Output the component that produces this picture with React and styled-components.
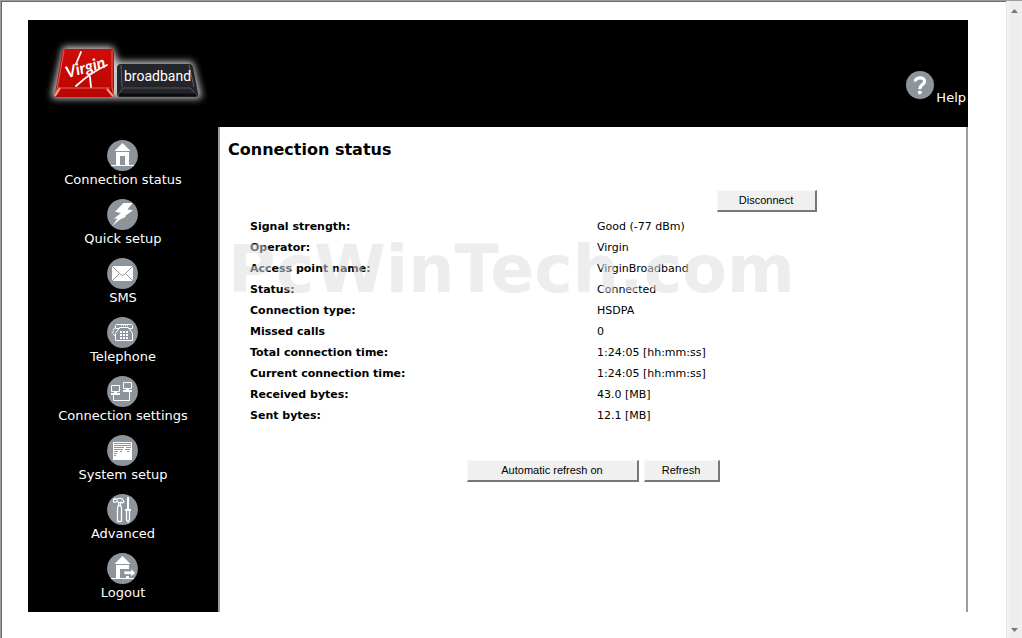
import React from "react";
import styled, { createGlobalStyle } from "styled-components";

const GlobalStyle = createGlobalStyle`
  *, *::before, *::after { box-sizing: border-box; }
  body {
    margin: 0;
    background: #fff;
    color: #000;
    font-family: Verdana, "DejaVu Sans", sans-serif;
    font-size: 11px;
  }
`;

const Viewport = styled.div`
  display: flex;
  min-height: 100vh;
  border-top: 1px solid #9c9c9c;
  border-left: 1px solid #9c9c9c;
`;

const Page = styled.div`
  flex: 1;
  min-width: 0;
  padding: 18px 38px 26px 26px;
  border-top: 1px solid #696969;
  border-left: 1px solid #696969;
`;

const ScrollTrack = styled.div`
  width: 16px;
  display: flex;
  flex-direction: column;
  justify-content: space-between;
  align-items: center;
  padding: 8px 0 6px;
  border-left: 1px solid #e6e6e6;
  background: linear-gradient(to right, #f3f3f3, #ececec 40%, #efefef);
`;

const Header = styled.header`
  display: flex;
  justify-content: space-between;
  align-items: flex-end;
  padding: 15px 2px 12px 12px;
  background: #000;
`;

const LogoLink = styled.a`
  display: block;
  svg { display: block; }
`;

const HelpLink = styled.a`
  display: flex;
  align-items: flex-end;
  gap: 2px;
  padding-bottom: 9px;
  color: #fff;
  font-size: 13px;
  line-height: 16px;
  text-decoration: none;
  svg { display: block; margin-bottom: 7px; }
`;

const Columns = styled.div`
  display: flex;
`;

const Sidebar = styled.nav`
  flex: none;
  width: 190px;
  padding: 13px 0 10px;
  background: #000;
`;

const NavList = styled.ul`
  display: flex;
  flex-direction: column;
  gap: 10px;
  margin: 0;
  padding: 0;
  list-style: none;
`;

const NavLink = styled.a`
  display: flex;
  flex-direction: column;
  align-items: center;
  color: #fff;
  font-size: 13px;
  line-height: 18px;
  text-decoration: none;
  svg { display: block; margin-right: 1px; }
`;

const Content = styled.main`
  flex: 1;
  min-width: 0;
  border: solid #9c9c9c;
  border-width: 0 2px;
`;

const Title = styled.h1`
  margin: 0;
  padding: 13px 8px 0;
  font-size: 16px;
  line-height: 20px;
`;

const StatusArea = styled.section`
  position: relative;
  padding: 30px 28px 0;
`;

const StatusTable = styled.table`
  width: 100%;
  table-layout: fixed;
  border-collapse: collapse;
  line-height: 21px;
  th, td { padding: 0; text-align: left; }
  tbody th { padding-left: 2px; }
  tbody td { padding-left: 4px; }
`;

const ActionCell = styled.td`
  && { height: 26px; padding-left: 2px; text-align: center; vertical-align: top; }
`;

const Button = styled.button`
  width: ${(p) => p.$width}px;
  height: 22px;
  padding: 0 0 1px;
  border: solid;
  border-width: 1px 2px 2px 1px;
  border-color: #f8f8f8 #777 #777 #f8f8f8;
  background: #f0f0f0;
  color: #000;
  font: 11px "Liberation Sans", Arial, sans-serif;
`;

const Actions = styled.div`
  display: flex;
  justify-content: center;
  gap: 5px;
  padding-top: 34px;
`;

const Watermark = styled.div`
  position: absolute;
  top: 74px;
  left: 8px;
  color: rgba(220, 220, 220, 0.52);
  font-size: 65px;
  font-weight: bold;
  line-height: 72px;
  white-space: nowrap;
  pointer-events: none;
`;

const IconBase = ({ children }) => (
  <svg width="31" height="31" viewBox="0 0 31 31" aria-hidden="true">
    <circle cx="15.5" cy="15.5" r="15.4" fill="#8e949c" />
    {children}
  </svg>
);

const HomeIcon = () => (
  <IconBase>
    <path d="M15.5 3 L23.5 11 H7.5Z" fill="#fff" />
    <path d="M9 12H22V25H27V26H4V25H9Z M13 16V25H18V16Z" fill="#fff" fillRule="evenodd" shapeRendering="crispEdges" />
  </IconBase>
);

const BoltIcon = () => (
  <IconBase>
    <path d="M16.5 4H25.5L20.5 10.5L26 11.2L18 17L19 17.7L13 20.5L5 27L10.5 19.8L7 19.5L14 14L8 12.7Z" fill="#fff" />
  </IconBase>
);

const MailIcon = () => (
  <IconBase>
    <path d="M5 8H26V23H5Z" fill="#fff" />
    <path d="M5 8L13.5 16.5Q15.5 18.5 17.5 16.5L26 8M5 23L12 16M26 23L19 16" fill="none" stroke="#8e949c" />
  </IconBase>
);

const PhoneIcon = () => (
  <IconBase>
    <path d="M9.5 7.5H24.5L25.5 8.5V11.5H21.5V10.5H12.5V11.5H8.5V8.5ZM11.5 12L8.5 16.5V23.5H25.5V16.5L22.5 12" fill="none" stroke="#fff" />
    <path d="M14 8.8h7" stroke="#fff" strokeDasharray="1 1" />
    <path d="M8 11l-2 1 1 2-2 1 1 2 2 1-1 1" fill="none" stroke="#fff" strokeDasharray="1.5 .7" />
    <path d="M13 14h2v2h-2zM16 14h2v2h-2zM19 14h2v2h-2zM13 17h2v2h-2zM16 17h2v2h-2zM19 17h2v2h-2zM13 20h2v2h-2zM16 20h2v2h-2zM19 20h2v2h-2z" fill="#fff" />
  </IconBase>
);

const NetworkIcon = () => (
  <IconBase>
    <g fill="none" stroke="#fff">
      <path d="M4.5 9.5H12.5V15.5H4.5ZM16.5 6.5H24.5V12.5H16.5ZM6.5 19V24.5H22.5V16" />
    </g>
    <path d="M4 17H13V19H4ZM16 14H25V16H16ZM7 16H10V17H7ZM19 13H22V14H19Z" fill="#fff" />
  </IconBase>
);

const DocumentIcon = () => (
  <IconBase>
    <path d="M6 7H25V25H6Z" fill="#fff" />
    <path d="M7 8.5H24M7 10.5H24M7 12.5H17M19 12.5H24M7 14.5H16M18 14.5H23M7 16.5H11M13 16.5H15M20 16.5H22M7 18.5H10M7 20.5H9" stroke="#8e949c" />
  </IconBase>
);

const ToolsIcon = () => (
  <IconBase>
    <path d="M12 4.5Q15.5 3.5 17 8L15.5 9L14 8Q11 9.5 10.5 7Q8 9 6.5 8V5.5Q8 4 9.5 5.5Q10.5 4.5 12 4.5M11.5 8.5V11.5M13.5 8.5V11.5" fill="none" stroke="#fff" strokeWidth="1.2" />
    <path d="M11.5 11.5H13.5L14.5 14V27L13.5 27.5H11L10.5 27V14Z" fill="none" stroke="#fff" strokeWidth="1.3" />
    <path d="M20 3h2v12h-2zM18 15h6v2h-6z" fill="#fff" />
    <path d="M19.5 17V25.5L20.5 27.5H21.5L22.5 25.5V17" fill="none" stroke="#fff" strokeWidth="1.3" />
  </IconBase>
);

const LogoutIcon = () => (
  <IconBase>
    <path d="M15.5 3L23.5 11H7.5Z" fill="#fff" />
    <path d="M9 12H22V16H13V25H19V23H22V25H27V26H4V25H9Z" fill="#fff" />
    <path d="M17 18H24V15.5L28.5 20L24 24V21.5H17Z" fill="#fff" stroke="#8e949c" strokeWidth=".7" />
  </IconBase>
);

const HelpIcon = () => (
  <svg width="28" height="28" viewBox="0 0 28 28" aria-hidden="true">
    <circle cx="14" cy="14" r="14" fill="#8e949c" />
    <path d="M9.3 10.5C8.8 6 18.6 5.4 18.6 10.2C18.6 13.6 13.8 13.5 13.8 18" fill="none" stroke="#fff" strokeWidth="3.2" />
    <circle cx="13.8" cy="21.4" r="1.9" fill="#fff" />
  </svg>
);

const Logo = () => (
  <svg width="180" height="80" viewBox="0 0 180 80" role="img" aria-label="Virgin broadband">
    <defs>
      <filter id="glow" x="-20%" y="-30%" width="140%" height="160%">
        <feGaussianBlur stdDeviation="3.5" />
      </filter>
      <linearGradient id="redKey" x1="0" y1="0" x2="0" y2="1">
        <stop offset="0" stopColor="#d00c08" />
        <stop offset="1" stopColor="#b90500" />
      </linearGradient>
    </defs>
    <path d="M25 14H71L76 29H151L159 61H14Z" fill="#c8c8c8" stroke="#c8c8c8" strokeWidth="5" strokeLinejoin="round" filter="url(#glow)" />
    <path d="M27 14H70Q74 14 74 18V59Q74 62 70 62H17Q14 62 15 58L22 18Q23 14 27 14Z" fill="url(#redKey)" />
    <path d="M24 16L17 54L15 60M72 16V53L74 60M18 53H70" fill="none" stroke="#e0645b" strokeWidth="1" />
    <path d="M15 61L20 53M73 61L67 54" stroke="#ff9b8d" strokeWidth="2" />
    <path d="M81 29H149Q152 29 153 32L158 58Q159 62 155 62H80Q77 62 77 58V33Q77 29 81 29Z" fill="#24252a" />
    <path d="M78 60L83 53H150L157 60" fill="none" stroke="#55565c" />
    <path d="M81 30L82 52M149 30L154 52" stroke="#606167" strokeWidth="1" />
    <path d="M79 60H156" stroke="#0c0c10" strokeWidth="3" />
    <g transform="rotate(-16 28 42)">
      <text x="27" y="43" fill="#fff" fontFamily="Lato, sans-serif" fontStyle="italic" fontWeight="700" fontSize="16">Virgin</text>
    </g>
    <path d="M41 17L36 29M36 51Q50 38 67 30M50 42L51 52" fill="none" stroke="#fff" strokeWidth="1.8" strokeLinecap="round" />
    <text x="84" y="46" fill="#fff" fontFamily="Roboto, sans-serif" fontSize="14">broadband</text>
  </svg>
);

const ScrollArrow = ({ up }) => (
  <svg width="7" height="4" viewBox="0 0 7 4" aria-hidden="true">
    <path d={up ? "M0 4L3.5 0L7 4Z" : "M0 0H7L3.5 4Z"} fill="#777" />
  </svg>
);

const NAV = [
  ["Connection status", HomeIcon],
  ["Quick setup", BoltIcon],
  ["SMS", MailIcon],
  ["Telephone", PhoneIcon],
  ["Connection settings", NetworkIcon],
  ["System setup", DocumentIcon],
  ["Advanced", ToolsIcon],
  ["Logout", LogoutIcon],
];

const STATUS = [
  ["Signal strength:", "Good (-77 dBm)"],
  ["Operator:", "Virgin"],
  ["Access point name:", "VirginBroadband"],
  ["Status:", "Connected"],
  ["Connection type:", "HSDPA"],
  ["Missed calls", "0"],
  ["Total connection time:", "1:24:05 [hh:mm:ss]"],
  ["Current connection time:", "1:24:05 [hh:mm:ss]"],
  ["Received bytes:", "43.0 [MB]"],
  ["Sent bytes:", "12.1 [MB]"],
];

export default function App() {
  return (
    <>
      <GlobalStyle />
      <Viewport>
        <Page>
          <Header>
            <LogoLink href="#home"><Logo /></LogoLink>
            <HelpLink href="#help"><HelpIcon />Help</HelpLink>
          </Header>
          <Columns>
            <Sidebar>
              <NavList>
                {NAV.map(([label, Icon]) => (
                  <li key={label}>
                    <NavLink href="#"><Icon />{label}</NavLink>
                  </li>
                ))}
              </NavList>
            </Sidebar>
            <Content>
              <Title>Connection status</Title>
              <StatusArea>
                <StatusTable>
                  <thead>
                    <tr>
                      <td />
                      <ActionCell><Button type="button" $width={100}>Disconnect</Button></ActionCell>
                    </tr>
                  </thead>
                  <tbody>
                    {STATUS.map(([label, value]) => (
                      <tr key={label}>
                        <th scope="row">{label}</th>
                        <td>{value}</td>
                      </tr>
                    ))}
                  </tbody>
                </StatusTable>
                <Actions>
                  <Button type="button" $width={172}>Automatic refresh on</Button>
                  <Button type="button" $width={76}>Refresh</Button>
                </Actions>
                <Watermark aria-hidden="true">PcWinTech.com</Watermark>
              </StatusArea>
            </Content>
          </Columns>
        </Page>
        <ScrollTrack aria-hidden="true">
          <ScrollArrow up />
          <ScrollArrow />
        </ScrollTrack>
      </Viewport>
    </>
  );
}
